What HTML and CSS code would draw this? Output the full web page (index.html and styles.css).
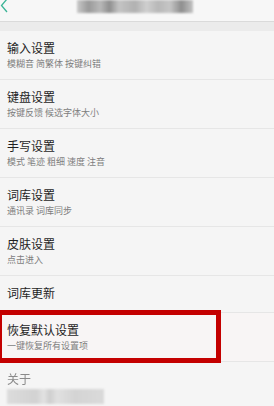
FILE: index.html
```html
<!DOCTYPE html>
<html lang="zh">
<head>
    <meta charset="UTF-8">
    <meta name="viewport" content="width=device-width, initial-scale=1.0">
    <title>设置</title>
    <link rel="stylesheet" href="styles.css">
</head>
<body>
    <div class="cabecera">
        <svg class="atras" width="10" height="14" viewBox="0 0 10 14">
            <path d="M7 -1 L1.5 5.5 L7 12" fill="none" stroke="#3cb497" stroke-width="1.3"/>
        </svg>
        <div class="titulo-borroso"></div>
    </div>
    <div class="banda"></div>
    <ul class="lista">
        <li class="fila">
            <div class="titulo">输入设置</div>
            <div class="sub">模糊音 简繁体 按键纠错</div>
        </li>
        <li class="fila">
            <div class="titulo">键盘设置</div>
            <div class="sub">按键反馈 候选字体大小</div>
        </li>
        <li class="fila">
            <div class="titulo">手写设置</div>
            <div class="sub">模式 笔迹 粗细 速度 注音</div>
        </li>
        <li class="fila">
            <div class="titulo">词库设置</div>
            <div class="sub">通讯录 词库同步</div>
        </li>
        <li class="fila">
            <div class="titulo">皮肤设置</div>
            <div class="sub">点击进入</div>
        </li>
        <li class="fila simple">
            <div class="titulo">词库更新</div>
        </li>
        <li class="fila marcada">
            <span class="recuadro"></span>
            <div class="titulo">恢复默认设置</div>
            <div class="sub">一键恢复所有设置项</div>
        </li>
        <li class="fila ultima">
            <div class="titulo gris">关于</div>
            <div class="sub-borroso"></div>
        </li>
    </ul>
</body>
</html>
```

FILE: styles.css
```css
body {
    margin: 0;
    background-color: #f5f5f5;
    font-family: "Noto Sans CJK SC", "Noto Sans", sans-serif;
    overflow: hidden;
}

/* ---------------- cabecera ---------------- */
.cabecera {
    height: 21px;
    background-color: #f7f7f7;
    border-bottom: 1px solid #dadada;
    display: flex;
    align-items: flex-start;
}

.atras {
    display: block;
}

.titulo-borroso {
    width: 116px;
    height: 13px;
    margin-left: 67px;
    background: linear-gradient(90deg, #c9c9c9 0%, #9a9a9a 10%, #b9b9b9 20%, #8f8f8f 28%, #c4c4c4 36%, #b1b1b1 50%, #cfcfcf 60%, #b8b8b8 70%, #c6c6c6 80%, #8e8e8e 90%, #c4c4c4 100%);
    filter: blur(1px);
}

.banda {
    height: 9px;
    background-color: #ebebeb;
}

/* ---------------- lista ---------------- */
.lista {
    list-style: none;
    margin: 0;
    padding: 0;
}

.fila {
    box-sizing: content-box;
    padding: 9px 7px 0;
    height: 39px;
    border-bottom: 1px solid #e6e6e6;
}

.fila.simple {
    height: 27px;
}

.fila.marcada {
    position: relative;
    background-color: #f8f5f5;
}

.fila.ultima {
    border-bottom: none;
}

.titulo {
    font-size: 12px;
    line-height: 16px;
    color: #1f1f1f;
}

.titulo.gris {
    color: #8a8a8a;
    filter: blur(0.4px);
}

.sub {
    font-size: 9px;
    line-height: 12px;
    margin-top: 2px;
    color: #7e7e7e;
}

.sub-borroso {
    width: 97px;
    height: 15px;
    margin-top: 2px;
    background: linear-gradient(90deg, #dcdcdc 0%, #d2d2d2 30%, #e2e2e2 38%, #cfcfcf 44%, #e0e0e0 52%, #d4d4d4 70%, #dadada 100%);
    filter: blur(1px);
}

/* recuadro rojo sobre la fila */
.recuadro {
    position: absolute;
    left: -3px;
    top: -3px;
    width: 214px;
    height: 43px;
    border: 5px solid #c40000;
    background: transparent;
}
```
